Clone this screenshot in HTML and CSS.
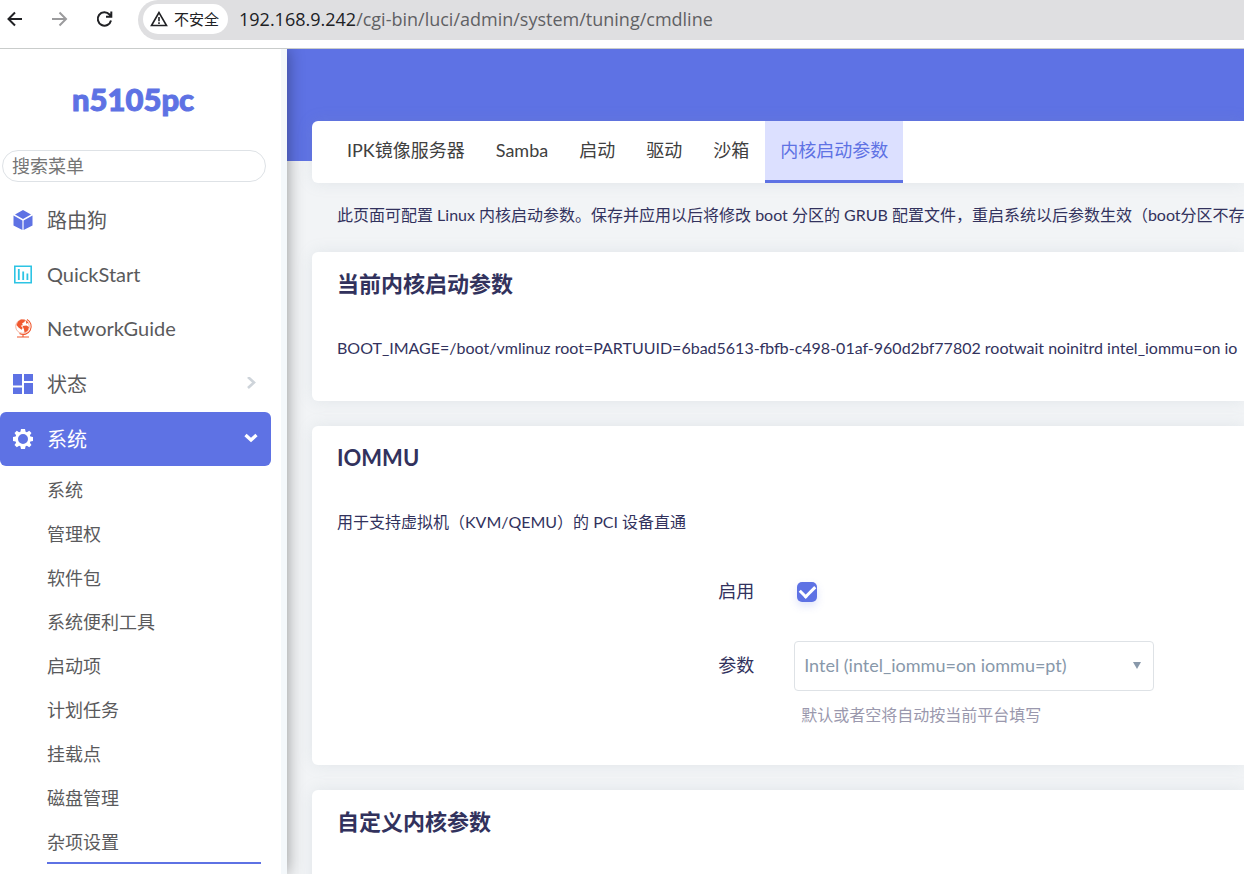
FILE: index.html
```html
<!DOCTYPE html>
<html lang="zh-CN">
<head>
<meta charset="utf-8">
<title>n5105pc - 内核启动参数</title>
<link rel="stylesheet" href="styles.css">
</head>
<body>
<div class="toolbar">
  <button class="tool" type="button" aria-label="后退"><svg width="20" height="20" viewBox="0 0 20 20" fill="none" stroke="currentColor" stroke-width="2"><path d="M18 10H4.500M11 3.500 4.500 10l6.500 6.500"/></svg></button>
  <button class="tool tool-off" type="button" aria-label="前进"><svg width="20" height="20" viewBox="0 0 20 20" fill="none" stroke="currentColor" stroke-width="2"><path d="M3 10h13.500M10.500 3.500 17 10l-6.500 6.500"/></svg></button>
  <button class="tool" type="button" aria-label="刷新"><svg width="20" height="20" viewBox="0 0 20 20" fill="none" stroke="currentColor" stroke-width="2"><path d="M17 11.500A6.700 6.700 0 1 1 15.500 5.500L17 7.200M17.300 2.500v5.300H12"/></svg></button>
  <div class="address">
    <button class="safety" type="button"><svg width="18" height="18" viewBox="0 0 18 18" fill="none" stroke="currentColor" stroke-width="1.600"><path d="M9 2.500 1.500 15.500h15zM9 7v4.300M9 12.300v1.700"/></svg>不安全</button>
    <span class="url">192.168.9.242<span class="path">/cgi-bin/luci/admin/system/tuning/cmdline</span></span>
  </div>
</div>
<div class="layout">
  <aside class="sidebar">
    <a class="brand" href="#">n5105pc</a>
    <input class="search" type="search" placeholder="搜索菜单" aria-label="搜索菜单">
    <nav class="menu">
      <a class="item" href="#"><svg class="icon" viewBox="0 0 20 20" fill="#5e72e4"><path d="M10 0 18 4.500 10 9 2 4.500zM.5 5.500l8.900 4.900V20L.5 15.500zM19.500 5.500v10L10.600 20v-9.600z"/></svg>路由狗</a>
      <a class="item" href="#"><svg class="icon" viewBox="0 0 20 20" fill="none" stroke="#2dc4e4"><path stroke-width="1.600" d="M1.800 2.300h16.400v16.400H1.800z"/><path stroke-width="1.800" d="M5.800 5v11M10.200 7.500V16M14.400 9.500V16"/></svg>QuickStart</a>
      <a class="item" href="#"><svg class="icon" viewBox="0 0 20 20"><circle cx="9.500" cy="8.500" r="6.800" fill="none" stroke="#f6b29d" stroke-width="1"/><path fill="#f0582f" d="M5 3.500 8 1.500l4 .2-.5 2.300-2.300 1.200.5 2-2 .5 2 2-1 2L5.500 9.500 3.500 7zM12.500 2l3 2.500-2 1.500zM9.500 8l4-.5L16 9l-1.500 4-3 1.500-.5-3z"/><path fill="none" stroke="#f0582f" stroke-width="1.100" d="M14 1.500a7.900 7.900 0 0 1-7.500 14M10 16v2.500M4 19h12"/></svg>NetworkGuide</a>
      <a class="item spaced" href="#"><svg class="icon" viewBox="0 0 20 20" fill="#5e72e4"><path d="M0 0h9v11.500H0zM11 0h9v7h-9zM0 13.500h9V20H0zM11 9h9v11h-9z"/></svg>状态<svg class="arrow" viewBox="0 0 14 14" fill="none" stroke="#ced4da" stroke-width="2.600"><path d="m4 0 6 5.500L4 11"/></svg></a>
      <a class="item active" href="#"><svg class="icon" viewBox="0 0 20 20" fill="#fff" fill-rule="evenodd"><path d="M8 0h4l.6 2.700 1.300.5L16.200 1.700 18.500 4l-1.600 2.200.5 1.300L20 8v4l-2.600.5-.5 1.300 1.600 2.200-2.300 2.300-2.300-1.500-1.300.5L12 20H8l-.6-2.700-1.300-.5-2.300 1.500L1.500 16l1.600-2.200-.5-1.300L0 12V8l2.600-.5.5-1.300L1.500 4l2.300-2.300 2.300 1.500 1.300-.5zM10 5a5 5 0 1 0 0 10 5 5 0 0 0 0-10z"/></svg>系统<svg class="arrow" viewBox="0 0 14 14" fill="none" stroke="#fff" stroke-width="3.300"><path d="M1.500 3 7 8l5.500-5"/></svg></a>
    </nav>
    <nav class="submenu">
      <a href="#">系统</a>
      <a href="#">管理权</a>
      <a href="#">软件包</a>
      <a href="#">系统便利工具</a>
      <a href="#">启动项</a>
      <a href="#">计划任务</a>
      <a href="#">挂载点</a>
      <a href="#">磁盘管理</a>
      <a class="current" href="#">杂项设置</a>
    </nav>
  </aside>
  <main class="main">
    <div class="banner"></div>
    <div class="content">
      <nav class="tabs">
        <a href="#">IPK镜像服务器</a>
        <a href="#">Samba</a>
        <a href="#">启动</a>
        <a href="#">驱动</a>
        <a href="#">沙箱</a>
        <a class="selected" href="#">内核启动参数</a>
      </nav>
      <p class="intro">此页面可配置 Linux 内核启动参数。保存并应用以后将修改 boot 分区的 GRUB 配置文件，重启系统以后参数生效（boot分区不存</p>
      <section class="card">
        <h3>当前内核启动参数</h3>
        <p class="text">BOOT_IMAGE=/boot/vmlinuz root=PARTUUID=6bad5613-fbfb-c498-01af-960d2bf77802 rootwait noinitrd intel_iommu=on io</p>
      </section>
      <section class="card card-form">
        <h3>IOMMU</h3>
        <p class="text">用于支持虚拟机（KVM/QEMU）的 PCI 设备直通</p>
        <div class="row">
          <label for="enable">启用</label>
          <input class="check" id="enable" type="checkbox" checked>
        </div>
        <div class="row row-select">
          <label for="param">参数</label>
          <div class="field">
            <select id="param"><option>Intel (intel_iommu=on iommu=pt)</option></select>
            <p class="hint">默认或者空将自动按当前平台填写</p>
          </div>
        </div>
      </section>
      <section class="card">
        <h3>自定义内核参数</h3>
      </section>
    </div>
  </main>
</div>
</body>
</html>
```
FILE: styles.css
```css
* { box-sizing: border-box; }
html, body { height: 100%; }
body {
  margin: 0;
  display: flex;
  flex-direction: column;
  overflow: hidden;
  background: #f2f4f6;
  color: #32325d;
  font: 16px/24px Lato, "Noto Sans CJK SC", sans-serif;
}
a { color: inherit; text-decoration: none; }
p, h3 { margin: 0; }
button { padding: 0; border: 0; background: none; color: inherit; font: inherit; }

.toolbar {
  flex: none;
  display: flex;
  height: 49px;
  padding: 0 0 8px 4px;
  border-bottom: 1px solid #c9cccb;
  background: #fff;
  color: #202124;
}
.tool { width: 45px; height: 38px; display: flex; align-items: center; }
.tool-off { color: #9b9b9d; }
.address {
  flex: 1;
  display: flex;
  align-items: center;
  gap: 11px;
  height: 40px;
  padding: 0 0 2px 5px;
  margin-left: -1px;
  border-radius: 20px 0 0 20px;
  background: #dfdfe1;
  white-space: nowrap;
}
.safety {
  display: flex;
  align-items: center;
  gap: 6px;
  height: 30px;
  padding: 0 9px 0 7px;
  border-radius: 15px;
  background: #fff;
  font-size: 15px;
}
.url { font: 18px/30px "Open Sans", sans-serif; }
.path { color: #5f6164; }

.layout { flex: 1; display: flex; min-height: 0; overflow: hidden; }
.sidebar {
  flex: none;
  width: 287px;
  border-right: 6px solid #f4f8fb;
  background: #fff;
  color: #5a5a5c;
  box-shadow: 0 0 16px rgba(0, 0, 0, .4);
  z-index: 1;
  overflow: hidden;
}
.brand {
  display: block;
  padding: 30px 15px 31px 0;
  color: #5e72e4;
  font-size: 31px;
  font-weight: 900;
  line-height: 40px;
  text-align: center;
  -webkit-text-stroke: 1px #5e72e4;
}
.search {
  display: block;
  width: 264px;
  height: 32px;
  margin: 0 0 11px 2px;
  padding: 0 9px;
  border: 1px solid #dee2e6;
  border-radius: 16px;
  background: #fff;
  font: inherit;
  font-size: 18px;
  outline: 0;
}
.search::placeholder { color: #757575; }
.menu { margin-right: 10px; font-size: 20px; }
.item {
  display: flex;
  align-items: center;
  height: 54px;
  padding: 0 13px;
}
.icon { width: 20px; height: 20px; margin-right: 14px; }
.arrow { width: 14px; height: 14px; margin-left: auto; }
.spaced { margin: 2px 0 1px; }
.active { border-radius: 6px; background: #5e72e4; color: #fff; }
.submenu { margin: 2px 20px 0 47px; font-size: 18px; line-height: 44px; }
.submenu a { display: block; height: 44px; }
.submenu .current { border-bottom: 2px solid #5e72e4; }

.main { flex: 1; min-width: 0; overflow: hidden; }
.banner { height: 112px; background: #5e72e4; }
.content { padding-left: 25px; margin-top: -40px; white-space: nowrap; }
.tabs {
  display: flex;
  gap: 1px;
  padding-left: 20px;
  border-radius: 6px 0 0 6px;
  background: #fff;
  color: #404040;
  font-size: 18px;
  line-height: 59px;
  box-shadow: 0 0 16px rgba(136, 152, 170, .15);
}
.tabs a { padding: 0 15px; border-bottom: 3px solid transparent; }
.tabs .selected { border-color: #5e72e4; background: #dce0ff; color: #5e72e4; }
.intro { padding: 20px 0 25px 25px; }
.card {
  margin-bottom: 25px;
  padding: 16px 0 41px 25px;
  border-radius: 6px 0 0 6px;
  background: #fff;
  box-shadow: 0 0 16px rgba(136, 152, 170, .15);
}
.card-form { padding-bottom: 38px; }
.card h3 { margin-bottom: 36px; font-size: 22px; line-height: 32px; font-weight: 700; }
.row {
  display: grid;
  grid-template-columns: 46% 360px;
  column-gap: 40px;
  margin-top: 45px;
  font-size: 18px;
}
.row-select { margin-top: 36px; }
.row label { text-align: right; line-height: 24px; }
.row-select label { line-height: 48px; }
.check {
  appearance: none;
  width: 20px;
  height: 20px;
  margin: 3px;
  border-radius: 5px;
  background: #5e72e4;
  box-shadow: 0 4px 8px rgba(94, 114, 228, .2);
  display: grid;
  place-items: center;
}
.check::before {
  content: "";
  width: 12px;
  height: 7px;
  margin-bottom: 4px;
  border: solid #fff;
  border-width: 0 0 3px 3px;
  rotate: -45deg;
}
.field { position: relative; }
.field::after {
  content: "";
  position: absolute;
  top: 21px;
  right: 13px;
  border: solid transparent;
  border-width: 7px 4px 0;
  border-top-color: #8898aa;
}
select {
  appearance: none;
  width: 100%;
  height: 50px;
  padding: 0 9px 2px;
  border: 1px solid #dee2e6;
  border-radius: 4px;
  background: #fff;
  color: #8898aa;
  font: inherit;
}
.hint { padding: 12px 0 0 7px; color: #9a98ad; font-size: 16px; }
```
